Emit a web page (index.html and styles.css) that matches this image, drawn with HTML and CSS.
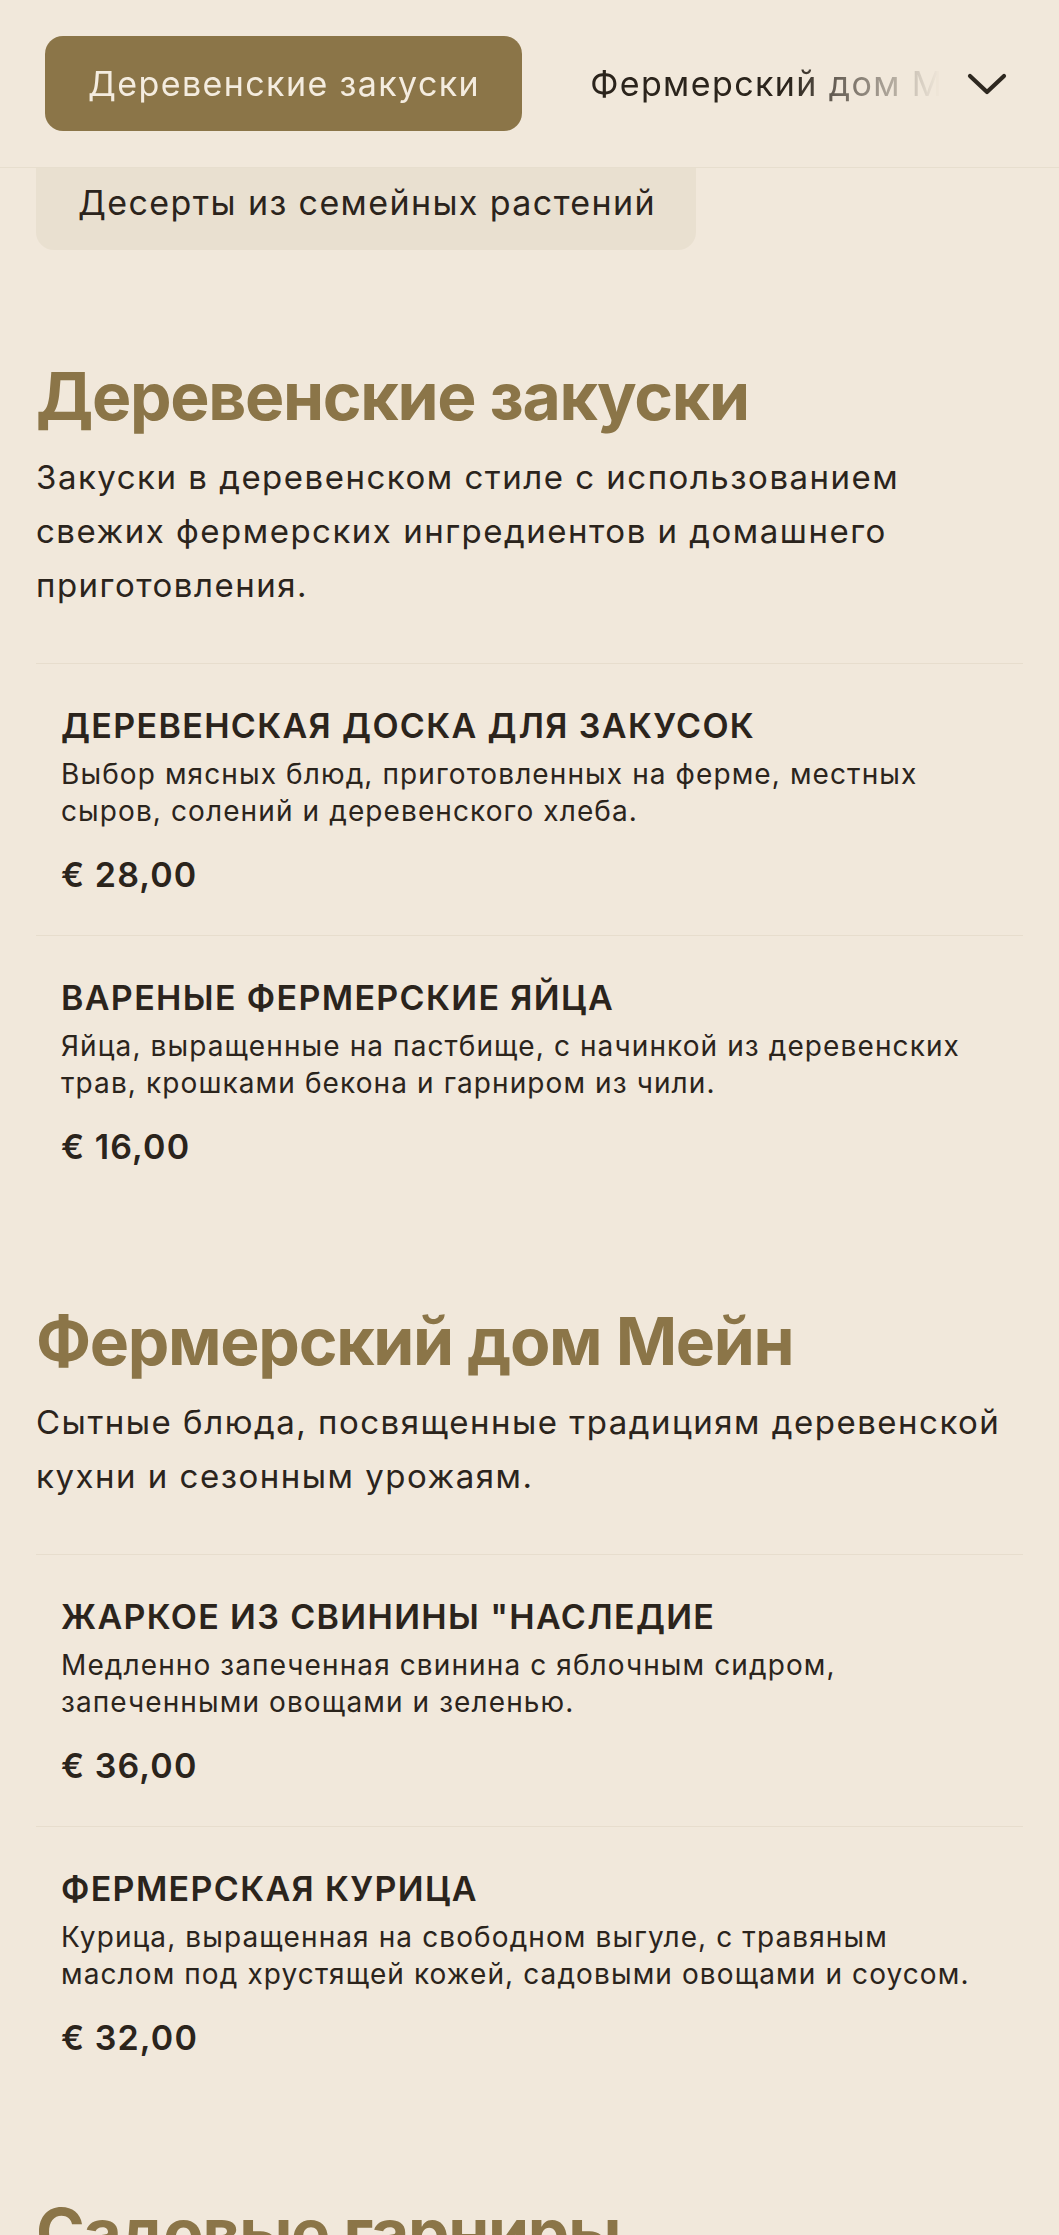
FILE: index.html
```html
<!DOCTYPE html>
<html lang="ru">
<head>
<meta charset="utf-8">
<title>Меню</title>
<link rel="stylesheet" href="styles.css">
</head>
<body>
<header class="topbar">
  <nav class="cats">
    <a class="cat cat-active">Деревенские закуски</a>
    <a class="cat">Фермерский дом Мейн</a>
    <a class="cat">Садовые гарниры</a>
  </nav>
  <button class="toggle" aria-label="Все категории">
    <svg viewBox="0 0 40 24" width="40" height="24"><path d="M3 4 L20 20 L37 4" fill="none" stroke="#2e2820" stroke-width="4.2" stroke-linecap="round" stroke-linejoin="round"/></svg>
  </button>
</header>

<div class="catlist">
  <span class="catlist-item">Десерты из семейных растений</span>
</div>

<main class="menu">
  <section class="sec">
    <h2 class="sec-title">Деревенские закуски</h2>
    <p class="sec-desc">Закуски в деревенском стиле с использованием свежих фермерских ингредиентов и домашнего приготовления.</p>
    <div class="items">
      <article class="item">
        <h3 class="item-name">ДЕРЕВЕНСКАЯ ДОСКА ДЛЯ ЗАКУСОК</h3>
        <p class="item-desc">Выбор мясных блюд, приготовленных на ферме, местных сыров, солений и деревенского хлеба.</p>
        <div class="item-price">€ 28,00</div>
      </article>
      <article class="item">
        <h3 class="item-name">ВАРЕНЫЕ ФЕРМЕРСКИЕ ЯЙЦА</h3>
        <p class="item-desc">Яйца, выращенные на пастбище, с начинкой из деревенских трав, крошками бекона и гарниром из чили.</p>
        <div class="item-price">€ 16,00</div>
      </article>
    </div>
  </section>

  <section class="sec">
    <h2 class="sec-title">Фермерский дом Мейн</h2>
    <p class="sec-desc">Сытные блюда, посвященные традициям деревенской кухни и сезонным урожаям.</p>
    <div class="items">
      <article class="item">
        <h3 class="item-name">ЖАРКОЕ ИЗ СВИНИНЫ "НАСЛЕДИЕ</h3>
        <p class="item-desc">Медленно запеченная свинина с яблочным сидром, запеченными овощами и зеленью.</p>
        <div class="item-price">€ 36,00</div>
      </article>
      <article class="item">
        <h3 class="item-name">ФЕРМЕРСКАЯ КУРИЦА</h3>
        <p class="item-desc">Курица, выращенная на свободном выгуле, с травяным маслом под хрустящей кожей, садовыми овощами и соусом.</p>
        <div class="item-price">€ 32,00</div>
      </article>
    </div>
  </section>

  <section class="sec">
    <h2 class="sec-title">Садовые гарниры</h2>
    <p class="sec-desc">Сезонные овощи и гарниры с нашего огорода.</p>
  </section>
</main>
</body>
</html>
```
FILE: styles.css
```css
* { box-sizing: border-box; }
html, body { margin: 0; padding: 0; }
body {
  background: #f1e8db;
  color: #2b241c;
  font-family: Inter, "Noto Sans", sans-serif;
  overflow: hidden;
}
.topbar {
  position: sticky;
  top: 0;
  z-index: 2;
  display: flex;
  align-items: center;
  height: 168px;
  padding: 0 52px 0 45px;
  background: #f1e8db;
  border-bottom: 1px solid #e7dece;
}
.cats {
  flex: 1;
  display: flex;
  gap: 25px;
  overflow: hidden;
  -webkit-mask-image: linear-gradient(to right, #000 calc(100% - 150px), transparent 100%);
  mask-image: linear-gradient(to right, #000 calc(100% - 150px), transparent 100%);
}
.cat {
  flex-shrink: 0;
  display: flex;
  align-items: center;
  height: 95px;
  padding: 0 42px 0 43px;
  border-radius: 18px;
  font-size: 34px;
  letter-spacing: 1.4px;
  white-space: nowrap;
  color: #2b241c;
}
.cat-active {
  background: #8b7548;
  color: #f4ecdf;
}
.toggle {
  flex-shrink: 0;
  width: 40px;
  margin-left: 27px;
  padding: 0;
  border: 0;
  background: none;
  display: flex;
  align-items: center;
}
.catlist {
  padding: 0 36px;
}
.catlist-item {
  display: inline-flex;
  align-items: center;
  height: 82px;
  padding: 0 40px 13px 42px;
  background: #e9e0d0;
  border-radius: 0 0 18px 18px;
  font-size: 34px;
  letter-spacing: 1.4px;
  white-space: nowrap;
  color: #2b241c;
}
.menu {
  padding: 0 36px;
}
.sec {
  padding-top: 107px;
}
.sec + .sec {
  padding-top: 95px;
}
.sec-title {
  margin: 0;
  font-size: 66px;
  line-height: 79px;
  font-weight: 700;
  letter-spacing: -0.02em;
  color: #8b7548;
}
.sec-desc {
  margin: 14px 0 0;
  font-size: 33px;
  line-height: 54px;
  letter-spacing: 1.5px;
  color: #2b241c;
}
.items {
  margin-top: 51px;
}
.item {
  border-top: 1px solid #e7ddcd;
  padding: 40px 25px 38px;
}
.item-name {
  margin: 0;
  font-size: 34px;
  line-height: 44px;
  font-weight: 600;
  letter-spacing: 1.35px;
}
.item-desc {
  margin: 8px 0 0;
  font-size: 28px;
  line-height: 37px;
  letter-spacing: 1.1px;
}
.item-price {
  margin-top: 23px;
  font-size: 34px;
  line-height: 44px;
  font-weight: 600;
  letter-spacing: 1.1px;
}
```
